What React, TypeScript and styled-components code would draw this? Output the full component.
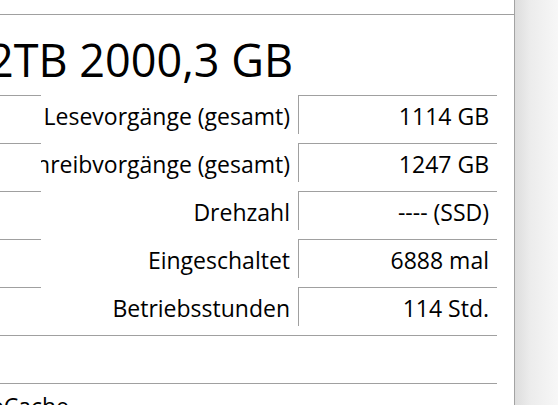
import React from 'react'
import styled, { createGlobalStyle } from 'styled-components'

const GlobalStyle = createGlobalStyle`
  html, body {
    margin: 0;
    padding: 0;
    background: #ffffff;
  }
  body {
    font-family: "Open Sans", "Noto Sans", "DejaVu Sans", sans-serif;
    color: #000000;
  }
`

const Screen = styled.div`
  width: 558px;
  height: 405px;
  display: flex;
  overflow: hidden;
`

const Window = styled.div`
  width: 514px;
  flex: none;
  border-right: 1px solid #a3a3a3;
  background: #ffffff;
  display: flex;
  flex-direction: column;
  overflow: hidden;
`

const Gutter = styled.div`
  flex: 1;
  background: linear-gradient(to right, #dddddd 0%, #ececec 35%, #f7f7f7 100%);
`

const TopStrip = styled.div`
  height: 14px;
  flex: none;
  border-bottom: 1px solid #a0a0a0;
`

const TitleRow = styled.div`
  height: 80px;
  flex: none;
  box-sizing: border-box;
  padding-top: 14px;
  width: 293px;
  display: flex;
  justify-content: flex-end;
`

const Title = styled.h1`
  margin: 0;
  flex: none;
  font-size: 45px;
  font-weight: 400;
  line-height: 61px;
  white-space: nowrap;
`

const Table = styled.div`
  display: flex;
  flex-direction: column;
  gap: 10px;
  width: 497px;
`

const Row = styled.div`
  display: grid;
  grid-template-columns: 41px 257px 199px;
  height: 38px;
  font-size: 23px;
  line-height: 36px;
`

const SideCell = styled.div`
  border-top: 1px solid #a0a0a0;
`

const Label = styled.div`
  display: flex;
  justify-content: flex-end;
  overflow: hidden;
  padding-right: 8px;
  padding-top: 3px;
  white-space: nowrap;
`

const Value = styled.div`
  border-top: 1px solid #a0a0a0;
  border-left: 1px solid #a0a0a0;
  text-align: right;
  padding-right: 8px;
  padding-top: 2px;
  white-space: nowrap;
`

const WideRow = styled.div`
  width: 497px;
  height: 48px;
  border-top: 1px solid #a0a0a0;
  box-sizing: border-box;
  font-size: 23px;
  line-height: 36px;
`

const Features = styled.div`
  width: 69px;
  display: flex;
  justify-content: flex-end;
  padding-top: 4px;
  white-space: nowrap;
`

const rows = [
  { label: 'Lesevorgänge (gesamt)', value: '1114 GB' },
  { label: 'Schreibvorgänge (gesamt)', value: '1247 GB' },
  { label: 'Drehzahl', value: '---- (SSD)' },
  { label: 'Eingeschaltet', value: '6888 mal' },
  { label: 'Betriebsstunden', value: '114 Std.' },
]

const App = () => {
  return (
    <>
      <GlobalStyle />
      <Screen>
        <Window>
          <TopStrip />
          <TitleRow>
            <Title>Samsung SSD 970 EVO Plus 2TB 2000,3 GB</Title>
          </TitleRow>
          <Table>
            {rows.map((r) => (
              <Row key={r.label}>
                <SideCell />
                <Label>
                  <span>{r.label}</span>
                </Label>
                <Value>{r.value}</Value>
              </Row>
            ))}
            <div>
              <WideRow />
              <WideRow>
                <Features>
                  <span>S.M.A.R.T., TRIM, VolatileWriteCache</span>
                </Features>
              </WideRow>
            </div>
          </Table>
        </Window>
        <Gutter />
      </Screen>
    </>
  )
}

export default App
